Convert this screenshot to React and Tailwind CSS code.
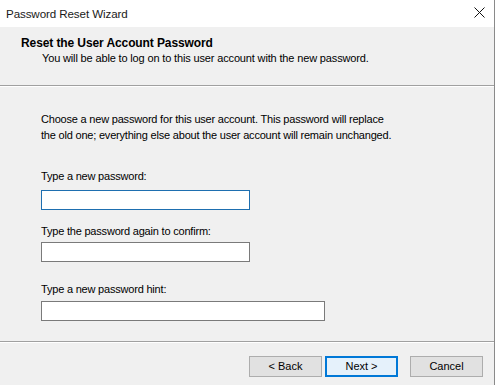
import React from "react";

const ui = { fontFamily: '"Liberation Sans", Arial, sans-serif' };

export default function App() {
  return (
    <div className="flex h-[385px] w-[499px] overflow-hidden bg-white text-black" style={ui}>
      <div className="flex w-[495px] flex-col border-r border-[#8a8a8a] bg-[#f0f0f0]">
        {/* title bar */}
        <div className="flex h-[27px] shrink-0 items-center justify-between bg-white pl-[6px] pr-[9px]">
          <span className="text-[11.6px] tracking-[-0.1px] text-[#1a1a1a]">Password Reset Wizard</span>
          <svg width="11" height="11" viewBox="0 0 11 11" className="mb-[2px]">
            <path d="M0.5 0.5 L10.5 10.5 M10.5 0.5 L0.5 10.5" stroke="#111" strokeWidth="1" />
          </svg>
        </div>

        {/* header */}
        <div className="h-[59px] shrink-0 border-b border-[#a0a0a0] pl-[21px] pt-[9px]">
          <div className="text-[12px] font-bold leading-[14px] tracking-[-0.1px]">Reset the User Account Password</div>
          <div className="pl-[21px] pt-[2px] text-[11px] leading-[13px] tracking-[-0.15px]">
            You will be able to log on to this user account with the new password.
          </div>
        </div>
        <div className="h-px shrink-0 bg-white" />

        {/* body */}
        <div className="flex flex-1 flex-col pl-[41px] pt-[24px] text-[11px] leading-[16px] tracking-[-0.2px]">
          <p className="whitespace-nowrap">
            Choose a new password for this user account. This password will replace
            <br />
            the old one; everything else about the user account will remain unchanged.
          </p>

          <label className="mt-[27px] block leading-[13px]">Type a new password:</label>
          <input className="mt-[7px] h-[20px] w-[209px] border border-[#1e6fb0] bg-white outline-none" />

          <label className="mt-[15px] block leading-[13px]">Type the password again to confirm:</label>
          <input className="mt-[4px] h-[20px] w-[209px] border border-[#7a7a7a] bg-white outline-none" />

          <label className="mt-[21px] block leading-[13px]">Type a new password hint:</label>
          <input className="mt-[5px] h-[20px] w-[284px] border border-[#7a7a7a] bg-white outline-none" />
        </div>

        {/* footer */}
        <div className="h-px shrink-0 bg-[#a0a0a0]" />
        <div className="h-px shrink-0 bg-white" />
        <div className="flex h-[42px] shrink-0 items-start justify-end pr-[11px] pt-[13px] text-[11px]">
          <button className="h-[21px] w-[73px] border border-[#adadad] bg-[#e1e1e1]">&lt; Back</button>
          <button className="ml-[3px] h-[21px] w-[73px] border-2 border-[#0078d7] bg-[#e5f1fb]">Next &gt;</button>
          <button className="ml-[12px] h-[21px] w-[73px] border border-[#adadad] bg-[#e1e1e1]">Cancel</button>
        </div>
      </div>
    </div>
  );
}
